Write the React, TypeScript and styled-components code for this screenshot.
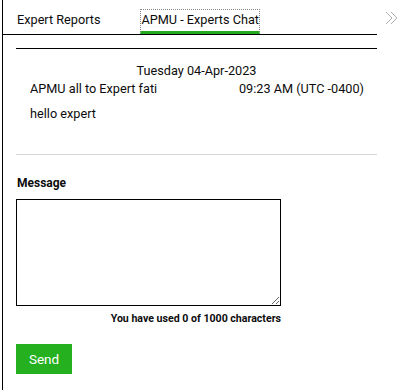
import React from "react";
import styled, { createGlobalStyle } from "styled-components";

const Global = createGlobalStyle`
  html, body { margin: 0; padding: 0; background: #fff; }
  body { font-family: Roboto, "Liberation Sans", Arial, sans-serif; color: #0c0c0c; }
`;

const Page = styled.div`
  display: flex;
  align-items: flex-start;
  height: 390px;
  overflow: hidden;
`;

const Panel = styled.div`
  margin-left: 2px;
  width: 375px;
  height: 390px;
  border-left: 1px solid #000;
  box-sizing: border-box;
`;

const TabBar = styled.div`
  display: flex;
  align-items: flex-end;
  height: 34px;
  border-bottom: 1px solid #000;
  padding-left: 14px;
  box-sizing: content-box;
`;

const Tab = styled.div<{ $active?: boolean }>`
  height: 25px;
  box-sizing: border-box;
  display: flex;
  align-items: flex-start;
  padding-top: ${(p) => (p.$active ? "2px" : "3px")};
  font-size: 12.7px;
  line-height: 16px;
  white-space: nowrap;
  margin-right: ${(p) => (p.$active ? "0" : "40px")};
  border: ${(p) => (p.$active ? "1px dotted #888" : "none")};
  border-bottom: ${(p) => (p.$active ? "3px solid #23a91e" : "none")};
`;

const Content = styled.div`
  margin: 13px 0 0 13px;
  border-top: 1px solid #000;
`;

const Thread = styled.div`
  padding-top: 14px;
  height: 91px;
  border-bottom: 1px solid #d8d8d8;
`;

const DateLine = styled.div`
  text-align: center;
  font-size: 12.7px;
  line-height: 16px;
`;

const MetaRow = styled.div`
  display: flex;
  justify-content: space-between;
  padding: 2px 13px 0 14px;
  font-size: 12.7px;
  line-height: 16px;
`;

const Body = styled.div`
  padding: 9px 14px 0;
  font-size: 12.7px;
  line-height: 16px;
`;

const Form = styled.div`
  display: flex;
  flex-direction: column;
  align-items: flex-start;
  padding-top: 20px;
`;

const Label = styled.label`
  font-weight: 700;
  font-size: 12px;
  line-height: 16px;
  padding-left: 1px;
`;

const Area = styled.textarea`
  margin-top: 8px;
  width: 265px;
  height: 107px;
  box-sizing: border-box;
  border: 1px solid #000;
  border-radius: 0;
  padding: 4px;
  font-family: inherit;
  font-size: 13px;
  outline: none;
  resize: both;
`;

const Counter = styled.div`
  width: 265px;
  text-align: right;
  font-weight: 700;
  font-size: 10.6px;
  line-height: 14px;
  margin-top: 6px;
`;

const SendButton = styled.button`
  margin-top: 18px;
  width: 56px;
  height: 30px;
  border: none;
  border-radius: 0;
  background: #25b01f;
  color: #fff;
  font-family: inherit;
  font-size: 13.5px;
  cursor: pointer;
`;

const Side = styled.div`
  padding: 10px 0 0 8px;
`;

export default function App() {
  return (
    <>
      <Global />
      <Page>
        <Panel>
          <TabBar>
            <Tab>Expert Reports</Tab>
            <Tab $active>APMU - Experts Chat</Tab>
          </TabBar>
          <Content>
            <Thread>
              <DateLine>Tuesday 04-Apr-2023</DateLine>
              <MetaRow>
                <span>APMU all to Expert fati</span>
                <span>09:23 AM (UTC -0400)</span>
              </MetaRow>
              <Body>hello expert</Body>
            </Thread>
            <Form>
              <Label>Message</Label>
              <Area />
              <Counter>You have used 0 of 1000 characters</Counter>
              <SendButton>Send</SendButton>
            </Form>
          </Content>
        </Panel>
        <Side>
          <svg width="14" height="14" viewBox="0 0 14 14" fill="none" stroke="#a8a8a8" strokeWidth="0.9">
            <polyline points="1,1 7,7 1,13" />
            <polyline points="6,1 12,7 6,13" />
          </svg>
        </Side>
      </Page>
    </>
  );
}
